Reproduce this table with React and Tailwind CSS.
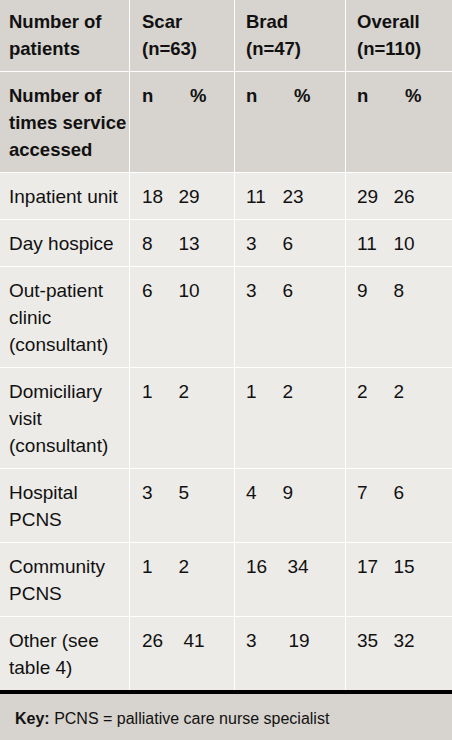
import React from "react";

const HEAD = "bg-[#d7d3ce] font-bold text-[18.5px]";
const BODY = "bg-[#edebe8] text-[19px]";

function Pair({ a, b, extra = "" }) {
  return (
    <span className="whitespace-nowrap">
      <span className="inline-block w-[36.5px]">{a}</span>
      <span className={"inline-block " + extra}>{b}</span>
    </span>
  );
}

const rows = [
  { label: ["Inpatient unit"], d: [["18", "29"], ["11", "23"], ["29", "26"]] },
  { label: ["Day hospice"], d: [["8", "13"], ["3", "6"], ["11", "10"]] },
  { label: ["Out-patient", "clinic", "(consultant)"], d: [["6", "10"], ["3", "6"], ["9", "8"]] },
  { label: ["Domiciliary", "visit", "(consultant)"], d: [["1", "2"], ["1", "2"], ["2", "2"]] },
  { label: ["Hospital", "PCNS"], d: [["3", "5"], ["4", "9"], ["7", "6"]] },
  { label: ["Community", "PCNS"], d: [["1", "2"], ["16", "34", "ml-[5px]"], ["17", "15"]] },
  { label: ["Other (see", "table 4)"], d: [["26", "41", "ml-[5px]"], ["3", "19", "ml-[6px]"], ["35", "32"]] },
];

const padX = ["pl-[9px]", "pl-[12px]", "pl-[11px]", "pl-[11px]"];

function Lines({ lines }) {
  return lines.map((l, i) => (
    <React.Fragment key={i}>
      {i > 0 && <br />}
      {l}
    </React.Fragment>
  ));
}

export default function App() {
  return (
    <div className="w-[452px] h-[740px] overflow-hidden bg-[#d7d3ce] text-[#111] font-['Liberation_Sans',Arial,sans-serif]">
      <div className="grid grid-cols-[129px_104px_110px_106px] gap-px bg-white leading-[27px]">
        {/* header row 1 */}
        <div className={HEAD + " pl-[9px] pt-[8px] pb-[9px] whitespace-nowrap"}>
          Number of<br />patients
        </div>
        <div className={HEAD + " pl-[12px] pt-[8px] pb-[9px]"}>
          Scar<br />(n=63)
        </div>
        <div className={HEAD + " pl-[11px] pt-[8px] pb-[9px]"}>
          Brad<br />(n=47)
        </div>
        <div className={HEAD + " pl-[11px] pt-[8px] pb-[9px]"}>
          Overall<br />(n=110)
        </div>
        {/* header row 2 */}
        <div className={HEAD + " pl-[9px] pt-[10px] pb-[9px] whitespace-nowrap"}>
          Number of<br />times service<br />accessed
        </div>
        {["pl-[12px]", "pl-[11px]", "pl-[11px]"].map((p, i) => (
          <div key={i} className={HEAD + " " + p + " pt-[10px] pb-[9px] whitespace-nowrap"}>
            <span className="inline-block w-[48px]">n</span>%
          </div>
        ))}
        {rows.map((r, ri) => (
          <React.Fragment key={ri}>
            <div className={BODY + " pl-[9px] pt-[10px] pb-[9px] whitespace-nowrap"}>
              <Lines lines={r.label} />
            </div>
            {r.d.map((p, ci) => (
              <div key={ci} className={BODY + " " + padX[ci + 1] + " pt-[10px] pb-[9px]"}>
                <Pair a={p[0]} b={p[1]} extra={p[2] || ""} />
              </div>
            ))}
          </React.Fragment>
        ))}
      </div>
      <div className="border-t-4 border-black bg-[#d7d3ce] pl-[15px] pt-[13px] text-[16px] leading-[24px]">
        <span className="font-bold">Key:</span> PCNS = palliative care nurse specialist
      </div>
    </div>
  );
}
